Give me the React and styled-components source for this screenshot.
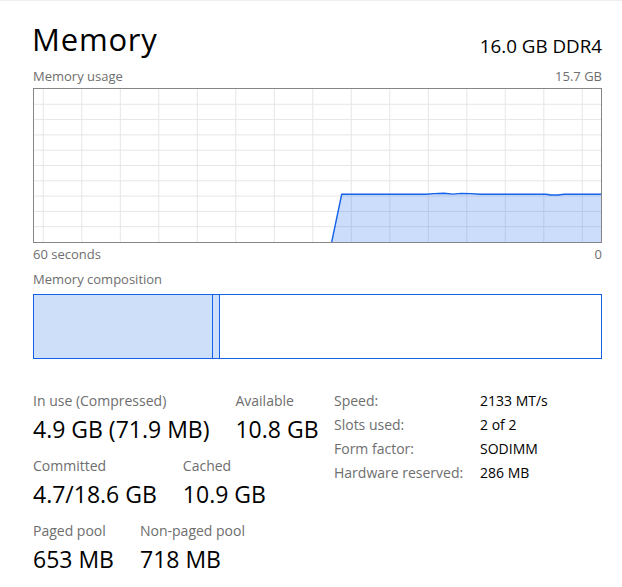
import React from 'react';
import styled, { createGlobalStyle } from 'styled-components';

const GlobalStyle = createGlobalStyle`
  body {
    margin: 0;
    background: #ffffff;
    font-family: "Open Sans", "Noto Sans", "Liberation Sans", sans-serif;
    color: #000000;
  }
`;

const BLUE = '#1262ea';

const Page = styled.div`
  width: 622px;
  height: 587px;
  box-sizing: border-box;
  border-top: 1px solid #efeff2;
  padding: 0 20px 0 33px;
  overflow: hidden;
`;

const Header = styled.div`
  display: flex;
  justify-content: space-between;
  align-items: flex-end;
  margin-top: 18px;
`;

const Title = styled.h1`
  margin: 0 0 0 -1px;
  font-size: 31px;
  line-height: 40px;
  font-weight: 400;
  letter-spacing: 0.8px;
`;

const Spec = styled.div`
  font-size: 18.8px;
  line-height: 24px;
  margin-bottom: 1px;
`;

const CaptionRow = styled.div`
  display: flex;
  justify-content: space-between;
  font-size: 13px;
  line-height: 18px;
  color: #6e6e6e;
  margin-top: ${p => p.$top || 0}px;
`;

const GraphBox = styled.div`
  margin-top: 3px;
  height: 155px;
  box-sizing: border-box;
  border: 1px solid #858585;
  svg {
    display: block;
  }
`;

const Composition = styled.div`
  margin-top: 6px;
  width: 569px;
  height: 65px;
  box-sizing: border-box;
  border: 1px solid ${BLUE};
  display: flex;
`;

const Segment = styled.div`
  width: ${p => p.$w}px;
  flex: ${p => (p.$w ? 'none' : '1')};
  background: ${p => (p.$filled ? '#cddff9' : '#ffffff')};
  border-right: ${p => (p.$edge ? `1px solid ${BLUE}` : 'none')};
  box-sizing: border-box;
`;

const Stats = styled.div`
  display: flex;
  align-items: flex-start;
  margin-top: 32px;
`;

const LeftStats = styled.div`
  width: 301px;
  flex: none;
`;

const StatRow = styled.div`
  display: flex;
  gap: 26px;
  margin-bottom: 12px;
`;

const Stat = styled.div`
  display: flex;
  flex-direction: column;
`;

const StatLabel = styled.div`
  font-size: 14px;
  line-height: 19px;
  color: #6e6e6e;
  white-space: nowrap;
`;

const StatValue = styled.div`
  margin-top: 4px;
  font-size: 23px;
  line-height: 30px;
  white-space: nowrap;
`;

const Specs = styled.div`
  display: grid;
  grid-template-columns: 146px auto;
  margin-top: -2px;
  font-size: 14px;
  line-height: 24px;
`;

const SpecKey = styled.div`
  color: #6e6e6e;
`;

const SpecVal = styled.div`
  color: #000000;
`;

const W = 567;
const H = 153;

function UsageGraph() {
  const cols = Array.from({ length: 15 }, (_, k) => 9.3 + 38.5 * k);
  const rows = Array.from({ length: 9 }, (_, k) => 15.3 * (k + 1));
  const line = [
    [297.7, 153], [307.7, 105.3], [392, 105.3], [400, 104.6], [410, 104.3],
    [419, 105.1], [427, 104.4], [437, 104.6], [446, 105.3], [512, 105.3],
    [517, 106], [524, 106], [530, 105.3], [567, 105.3],
  ];
  const pts = line.map(p => p.join(',')).join(' ');
  return (
    <svg width={W} height={H} viewBox={`0 0 ${W} ${H}`}>
      {cols.map(x => (
        <line key={`c${x}`} x1={x} x2={x} y1={0} y2={H} stroke="#e6e6e6" strokeWidth="1" />
      ))}
      {rows.map(y => (
        <line key={`r${y}`} x1={0} x2={W} y1={y} y2={y} stroke="#e6e6e6" strokeWidth="1" />
      ))}
      <polygon points={`${pts} 567,153`} fill={BLUE} fillOpacity="0.22" />
      <polyline points={pts} fill="none" stroke={BLUE} strokeWidth="1.4" />
    </svg>
  );
}

const leftStats = [
  [['In use (Compressed)', '4.9 GB (71.9 MB)'], ['Available', '10.8 GB']],
  [['Committed', '4.7/18.6 GB'], ['Cached', '10.9 GB']],
  [['Paged pool', '653 MB'], ['Non-paged pool', '718 MB']],
];

const specs = [
  ['Speed:', '2133 MT/s'],
  ['Slots used:', '2 of 2'],
  ['Form factor:', 'SODIMM'],
  ['Hardware reserved:', '286 MB'],
];

export default function App() {
  return (
    <>
      <GlobalStyle />
      <Page>
        <Header>
          <Title>Memory</Title>
          <Spec>16.0 GB DDR4</Spec>
        </Header>

        <CaptionRow $top={8}>
          <span>Memory usage</span>
          <span>15.7 GB</span>
        </CaptionRow>
        <GraphBox>
          <UsageGraph />
        </GraphBox>
        <CaptionRow $top={2}>
          <span>60 seconds</span>
          <span>0</span>
        </CaptionRow>

        <CaptionRow $top={7}>
          <span>Memory composition</span>
        </CaptionRow>
        <Composition>
          <Segment $w={179} $filled $edge />
          <Segment $w={7} $filled $edge />
          <Segment />
        </Composition>

        <Stats>
          <LeftStats>
            {leftStats.map((row, i) => (
              <StatRow key={i}>
                {row.map(([label, value]) => (
                  <Stat key={label}>
                    <StatLabel>{label}</StatLabel>
                    <StatValue>{value}</StatValue>
                  </Stat>
                ))}
              </StatRow>
            ))}
          </LeftStats>
          <Specs>
            {specs.map(([k, v]) => (
              <React.Fragment key={k}>
                <SpecKey>{k}</SpecKey>
                <SpecVal>{v}</SpecVal>
              </React.Fragment>
            ))}
          </Specs>
        </Stats>
      </Page>
    </>
  );
}
